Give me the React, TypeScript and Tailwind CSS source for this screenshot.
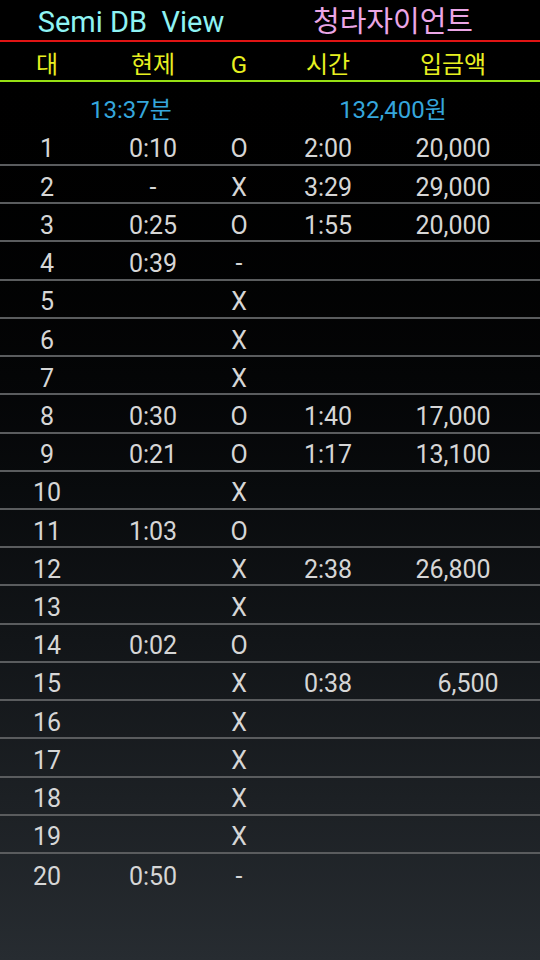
const rows: [string, string, string, string, string][] = [
	["1", "0:10", "O", "2:00", "20,000"],
	["2", "-", "X", "3:29", "29,000"],
	["3", "0:25", "O", "1:55", "20,000"],
	["4", "0:39", "-", "", ""],
	["5", "", "X", "", ""],
	["6", "", "X", "", ""],
	["7", "", "X", "", ""],
	["8", "0:30", "O", "1:40", "17,000"],
	["9", "0:21", "O", "1:17", "13,100"],
	["10", "", "X", "", ""],
	["11", "1:03", "O", "", ""],
	["12", "", "X", "2:38", "26,800"],
	["13", "", "X", "", ""],
	["14", "0:02", "O", "", ""],
	["15", "", "X", "0:38", "6,500"],
	["16", "", "X", "", ""],
	["17", "", "X", "", ""],
	["18", "", "X", "", ""],
	["19", "", "X", "", ""],
	["20", "0:50", "-", "", ""],
];

const cols = "grid grid-cols-[94px_118px_54px_124px_126px]";
const font = { fontFamily: "Roboto, 'Noto Sans CJK KR', sans-serif" };

export default function App() {
	return (
		<div
			className="w-[540px] h-[960px] overflow-hidden bg-gradient-to-b from-black to-[#272c31] text-[24px] leading-none"
			style={font}
		>
			<div className="grid grid-cols-[262px_262px] h-[40px] items-center pt-[5px] text-[29px]">
				<div className="text-center text-[#8ef3f3] whitespace-pre">Semi DB  View</div>
				<div className="text-center text-[#eba6e6]">청라자이언트</div>
			</div>
			<div className="h-[2px] bg-[#e01414]" />
			<div className={`${cols} h-[38px] items-center pt-[7px] text-[#e8f020]`}>
				<div className="text-center">대</div>
				<div className="text-center">현제</div>
				<div className="text-center">G</div>
				<div className="text-center">시간</div>
				<div className="text-center">입금액</div>
			</div>
			<div className="h-[2px] bg-[#96e014]" />
			<div className="grid grid-cols-[262px_262px] h-[45.8px] items-center pt-[10px] text-[#35a6dc]">
				<div className="text-center">13:37분</div>
				<div className="text-center">132,400원</div>
			</div>
			{rows.map((r, i) => (
				<div
					key={r[0]}
					className={`${cols} h-[38.22px] items-center pt-[6px] text-[25px] text-[#d6d6d6] ${
						i < rows.length - 1 ? "border-b-2 border-[#5a5c5e]" : ""
					}`}
				>
					<div className="text-center">{r[0]}</div>
					<div className="text-center">{r[1]}</div>
					<div className="text-center">{r[2]}</div>
					<div className="text-center">{r[3]}</div>
					<div className={`text-center ${r[4] === "6,500" ? "pl-[30px]" : ""}`}>{r[4]}</div>
				</div>
			))}
		</div>
	);
}
